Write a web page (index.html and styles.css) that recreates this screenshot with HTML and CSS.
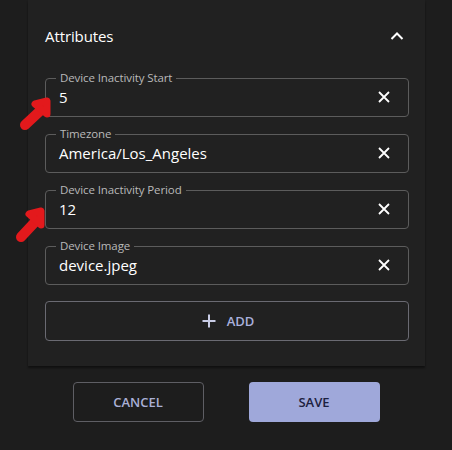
FILE: index.html
```html
<!DOCTYPE html>
<html>
<head>
<meta charset="utf-8">
<link rel="stylesheet" href="styles.css">
</head>
<body>
<div class="page">
  <section class="card">
    <div class="card-head">
      <h2 class="title">Attributes</h2>
      <svg class="chevron" width="14" height="8" viewBox="0 0 14 8"><path d="M1.5 7 L7 1.5 L12.5 7" fill="none" stroke="#fff" stroke-width="2"/></svg>
    </div>
    <div class="fields">
      <fieldset class="field">
        <legend>Device Inactivity Start</legend>
        <div class="row"><span class="value">5</span><svg class="clear" width="12" height="12" viewBox="0 0 12 12"><path d="M1 1 L11 11 M11 1 L1 11" stroke="#fff" stroke-width="1.8"/></svg></div>
      </fieldset>
      <fieldset class="field">
        <legend>Timezone</legend>
        <div class="row"><span class="value">America/Los_Angeles</span><svg class="clear" width="12" height="12" viewBox="0 0 12 12"><path d="M1 1 L11 11 M11 1 L1 11" stroke="#fff" stroke-width="1.8"/></svg></div>
      </fieldset>
      <fieldset class="field">
        <legend>Device Inactivity Period</legend>
        <div class="row"><span class="value">12</span><svg class="clear" width="12" height="12" viewBox="0 0 12 12"><path d="M1 1 L11 11 M11 1 L1 11" stroke="#fff" stroke-width="1.8"/></svg></div>
      </fieldset>
      <fieldset class="field">
        <legend>Device Image</legend>
        <div class="row"><span class="value">device.jpeg</span><svg class="clear" width="12" height="12" viewBox="0 0 12 12"><path d="M1 1 L11 11 M11 1 L1 11" stroke="#fff" stroke-width="1.8"/></svg></div>
      </fieldset>
    </div>
    <button class="add"><svg width="14" height="14" viewBox="0 0 14 14"><path d="M7 0.5 V13.5 M0.5 7 H13.5" stroke="#c9cde6" stroke-width="2"/></svg><span>ADD</span></button>
  </section>
  <div class="actions">
    <button class="btn cancel">CANCEL</button>
    <button class="btn save">SAVE</button>
  </div>
  <svg class="arrow arrow1" width="40" height="40" viewBox="0 0 40 40"><path d="M9 30 L24 16" stroke="#e3191c" stroke-width="10" stroke-linecap="round"/><path d="M19 9 L31 6 L31 19 Z" fill="#e3191c" stroke="#e3191c" stroke-width="7" stroke-linejoin="round"/></svg>
  <svg class="arrow arrow2" width="40" height="40" viewBox="0 0 40 40"><path d="M9 32 L23 17" stroke="#e3191c" stroke-width="10" stroke-linecap="round"/><path d="M17 9 L29 6 L29 20 Z" fill="#e3191c" stroke="#e3191c" stroke-width="7" stroke-linejoin="round"/></svg>
</div>
</body>
</html>
```
FILE: styles.css
```css
* { box-sizing: border-box; }
html, body { margin: 0; padding: 0; background: #1d1d1d; }
body {
  font-family: "Open Sans", "Noto Sans", sans-serif;
  color: #fff;
  width: 452px;
  height: 450px;
  overflow: hidden;
}
.page {
  position: relative;
  display: flex;
  flex-direction: column;
  align-items: center;
}
.card {
  width: 397px;
  margin-left: 1px;
  background: #212121;
  padding: 24px 16px 25px 17px;
  box-shadow: 0 2px 2px rgba(0,0,0,0.45);
  display: flex;
  flex-direction: column;
}
.card-head {
  display: flex;
  align-items: center;
  justify-content: space-between;
  height: 24px;
  padding-right: 5px;
}
.title {
  margin: 0;
  font-size: 15px;
  font-weight: 400;
  letter-spacing: -0.1px;
}
.chevron { display: block; }
.fields {
  margin-top: 23px;
  display: flex;
  flex-direction: column;
  gap: 10px;
}
.field {
  margin: 0;
  border: 1px solid #5c5c5c;
  border-radius: 4px;
  padding: 0 18px 7px 13px;
  min-width: 0;
}
.field legend {
  font-size: 11.5px;
  line-height: 14px;
  color: #b9b9b9;
  padding: 0 4px;
  margin-left: -3px;
  letter-spacing: -0.1px;
}
.row {
  display: flex;
  align-items: center;
  justify-content: space-between;
  height: 24px;
}
.value {
  font-size: 15px;
}
.clear { display: block; }
.add {
  margin-top: 16px;
  height: 40px;
  background: transparent;
  border: 1px solid #6a6a72;
  border-radius: 4px;
  display: flex;
  align-items: center;
  justify-content: center;
  gap: 11px;
  color: #a9b0dc;
  font-family: inherit;
  font-size: 13px;
  font-weight: 600;
  padding: 0 0 0 2px;
}
.add svg { display: block; }
.actions {
  margin-top: 16px;
  display: flex;
  gap: 45px;
}
.btn {
  width: 131px;
  height: 40px;
  border-radius: 4px;
  font-family: inherit;
  font-size: 13px;
  font-weight: 600;
}
.cancel {
  background: transparent;
  border: 1px solid #5e5e64;
  color: #aab0d6;
}
.save {
  background: #9fa8da;
  border: none;
  color: #1d2140;
}
.arrow { position: absolute; }
.arrow1 { left: 16px; top: 95px; }
.arrow2 { left: 12px; top: 205px; }
```
